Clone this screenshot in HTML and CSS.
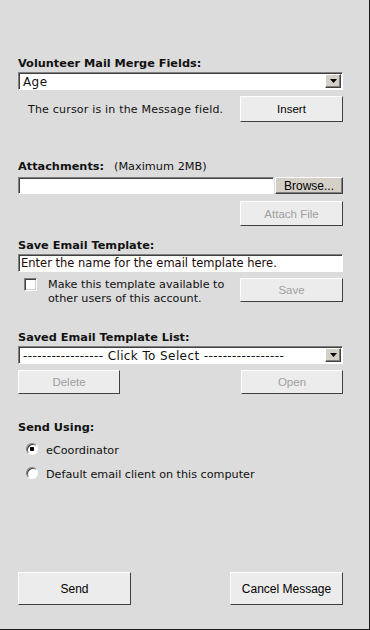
FILE: index.html
```html
<!DOCTYPE html>
<html lang="en">
<head>
<meta charset="UTF-8">
<meta name="viewport" content="width=device-width, initial-scale=1.0">
<link rel="stylesheet" href="styles.css">
<title>Email Options</title>
</head>
<body>
  <div class="panel">
    <div class="group merge">
      <div class="label">Volunteer Mail Merge Fields:</div>
      <div class="select">
        <span class="value">Age</span>
        <span class="arrow"><svg width="7" height="4" viewBox="0 0 7 4"><path d="M0 0h7L3.5 4z"/></svg></span>
      </div>
      <div class="row">
        <span class="note">The cursor is in the Message field.</span>
        <button class="btn">Insert</button>
      </div>
    </div>

    <div class="group attach">
      <div class="label">Attachments: <span class="hint">(Maximum 2MB)</span></div>
      <div class="file-row">
        <span class="file-box"></span>
        <button class="browse">Browse...</button>
      </div>
      <div class="row end">
        <button class="btn disabled">Attach File</button>
      </div>
    </div>

    <div class="group template">
      <div class="label">Save Email Template:</div>
      <div class="textbox">Enter the name for the email template here.</div>
      <div class="row top">
        <label class="share">
          <span class="checkbox"></span>
          <span>Make this template available to other users of this account.</span>
        </label>
        <button class="btn disabled">Save</button>
      </div>
    </div>

    <div class="group saved">
      <div class="label">Saved Email Template List:</div>
      <div class="select">
        <span class="value">----------------- Click To Select -----------------</span>
        <span class="arrow"><svg width="7" height="4" viewBox="0 0 7 4"><path d="M0 0h7L3.5 4z"/></svg></span>
      </div>
      <div class="row">
        <button class="btn disabled">Delete</button>
        <button class="btn disabled">Open</button>
      </div>
    </div>

    <div class="group send">
      <div class="label">Send Using:</div>
      <label class="option"><span class="radio checked"></span>eCoordinator</label>
      <label class="option"><span class="radio"></span>Default email client on this computer</label>
    </div>

    <div class="footer">
      <button class="btn big">Send</button>
      <button class="btn big">Cancel Message</button>
    </div>
  </div>
</body>
</html>
```

FILE: styles.css
```css
* {
  box-sizing: border-box;
}

body {
  margin: 0;
  padding: 0;
  background-color: #dcdcdc;
  font-family: "DejaVu Sans", Verdana, sans-serif;
  font-size: 11px;
  color: #111;
}

.panel {
  width: 370px;
  height: 630px;
  padding: 57px 26px 24px 18px;
  border-right: 1px solid #1c1c1c;
  border-bottom: 1px solid #1c1c1c;
  display: flex;
  flex-direction: column;
}

.label {
  font-weight: bold;
  font-size: 11.3px;
  line-height: 14px;
  margin-bottom: 1px;
}

.hint {
  font-weight: normal;
  margin-left: 6px;
}

.attach { margin-top: 38px; }
.template { margin-top: 13px; }
.saved { margin-top: 25px; }
.send { margin-top: 27px; }

.row {
  display: flex;
  justify-content: space-between;
  align-items: center;
  margin-top: 6px;
}

.row.end {
  justify-content: flex-end;
  margin-top: 7px;
}

.row.top {
  align-items: flex-start;
  margin-top: 6px;
}

.note {
  padding-left: 10px;
  font-size: 11px;
  letter-spacing: 0.2px;
}

/* sunken boxes */
.select,
.textbox,
.file-box {
  background-color: #fff;
  border: 1px solid;
  border-color: #808080 #fff #fff #808080;
  box-shadow: inset 1px 1px 0 #404040;
}

.select {
  height: 18px;
  display: flex;
  align-items: center;
  justify-content: space-between;
  padding: 0 1px 0 4px;
  font-size: 12px;
}

.select .value {
  line-height: 14px;
  padding-top: 1px;
  letter-spacing: 0.4px;
}

.arrow {
  width: 16px;
  height: 14px;
  background-color: #d4d0c8;
  border: 1px solid;
  border-color: #fff #404040 #404040 #fff;
  box-shadow: inset -1px -1px 0 #808080;
  display: flex;
  align-items: center;
  justify-content: center;
}

.textbox {
  height: 18px;
  padding: 1px 0 0 2px;
  font-size: 11.5px;
  line-height: 15px;
  color: #1a0a0a;
}

.file-row {
  display: flex;
  justify-content: space-between;
  margin-top: 3px;
}

.file-box {
  width: 256px;
  height: 17px;
}

.browse {
  width: 68px;
  height: 17px;
  padding: 0;
  background-color: #d4d0c8;
  border: 1px solid;
  border-color: #fff #404040 #404040 #fff;
  box-shadow: inset -1px -1px 0 #808080;
  font-family: "Liberation Sans", Arial, sans-serif;
  font-size: 12px;
  color: #000;
}

.btn {
  width: 103px;
  height: 25px;
  padding: 0;
  background-color: #ececec;
  border: 1px solid;
  border-color: #fff #404040 #404040 #fff;
  font-family: "Liberation Sans", Arial, sans-serif;
  font-size: 11.5px;
  color: #000;
}

.merge .btn {
  height: 26px;
}

.template .btn {
  height: 24px;
}

.saved .btn {
  height: 24px;
  width: 102px;
}

.btn.disabled {
  color: #a0a0a0;
}

.share {
  display: flex;
  align-items: flex-start;
  width: 215px;
  line-height: 14px;
  font-size: 11.2px;
}

.checkbox {
  flex: none;
  width: 13px;
  height: 13px;
  margin: 0 11px 0 6px;
  background-color: #fff;
  border: 1px solid;
  border-color: #808080 #fff #fff #808080;
  box-shadow: inset 1px 1px 0 #404040, inset -1px -1px 0 #d4d0c8;
}

.option {
  display: flex;
  align-items: center;
  height: 24px;
  font-size: 11.2px;
}

.send .label {
  margin-bottom: 3px;
}

.radio {
  width: 12px;
  height: 12px;
  margin: 0 8px 3px 8px;
  border-radius: 50%;
  background-color: #fff;
  border: 1px solid;
  border-color: #808080 #fff #fff #808080;
  box-shadow: inset 1px 1px 0 #404040;
}

.radio.checked {
  background: radial-gradient(circle, #000 0, #000 2px, #fff 2.5px);
}

.footer {
  margin-top: auto;
  display: flex;
  justify-content: space-between;
}

.btn.big {
  width: 113px;
  height: 33px;
  font-size: 12px;
}
```
